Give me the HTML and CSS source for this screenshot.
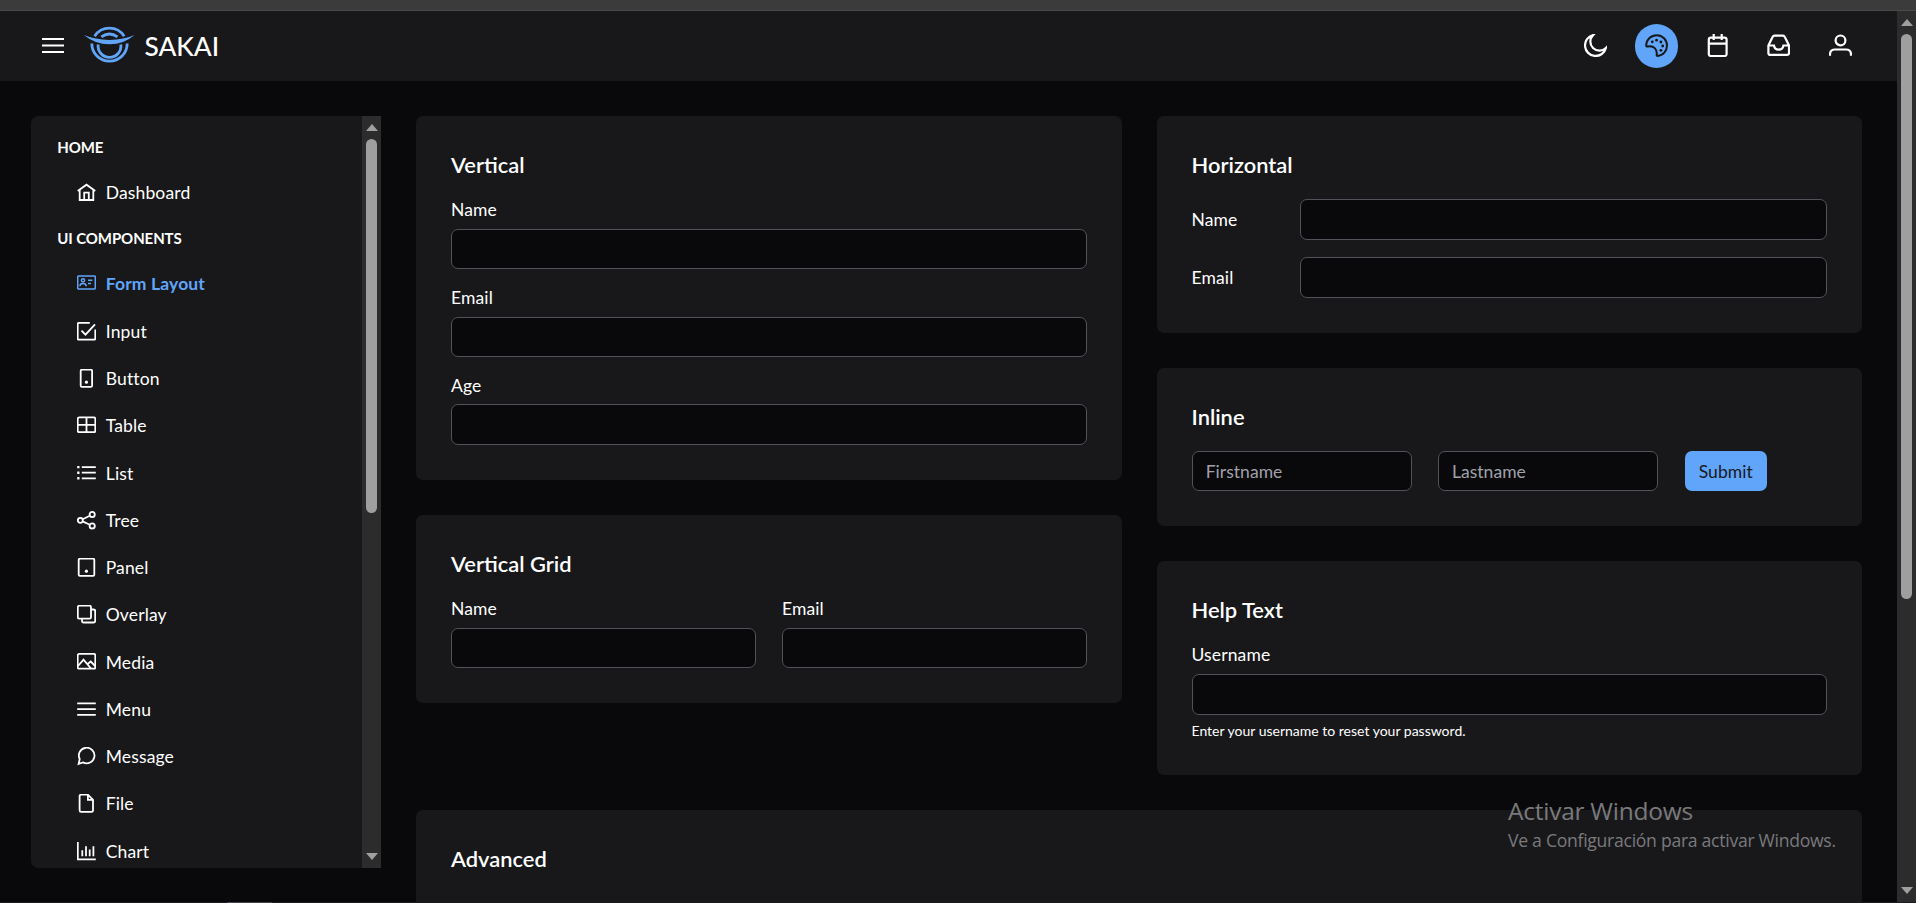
FILE: index.html
```html
<!DOCTYPE html>
<html lang="en">
<head>
<meta charset="utf-8">
<title>Sakai</title>
<link rel="stylesheet" href="styles.css">
</head>
<body>
<div class="chrome-strip"></div>
<div class="viewport">
  <div class="page">
    <header class="topbar">
      <button class="icon-btn"><svg width="23" height="23" viewBox="0 0 23 23"><path d="M1 5h22M1 11.5h22M1 18h22"/></svg></button>
      <a class="brand">
        <svg class="logo" width="52" height="40" viewBox="0 0 52 40">
          <g fill="none" stroke="#60a5fa">
            <path d="M11.6 10.2A17.6 17.6 0 0 1 41.2 10.2" stroke-width="2.8"/>
            <path d="M18.3 10.9Q26.5 5.2 34.5 10.9" stroke-width="2.8"/>
            <path d="M8.8 17.5A17.7 17.7 0 1 0 44.2 17.5" stroke-width="2.8"/>
            <path d="M15.2 18.5A11.4 11.4 0 1 0 37.8 18.5" stroke-width="2.8"/>
          </g>
          <path fill="#60a5fa" d="M.8 9Q12 13.7 26.5 14Q41 13.7 51.5 9Q41 18.3 26.5 18.3T.8 9Z"/>
        </svg>
        <span>SAKAI</span>
      </a>
      <nav class="actions">
        <button class="icon-btn"><svg width="23" height="23" viewBox="0 0 23 23"><path d="M9 1.1A10.6 10.6 0 1 0 21.9 14A8.8 8.8 0 0 1 9 1.1Z"/></svg></button>
        <button class="icon-btn active"><svg width="23" height="23" viewBox="0 0 23 23"><path d="M1.2 11.2C1.5 5.5 6 1.2 11.8 1.2A10.3 10.3 0 0 1 22 11.5C22 17 18 21.6 12.6 21.9Q11.5 21.9 11.7 20.6C12.3 15.5 9 11.2 2.5 12.5Q1.1 12.6 1.2 11.2Z"/><g class="dots"><circle cx="7.3" cy="7.8" r="1.4"/><circle cx="11.6" cy="6.2" r="1.4"/><circle cx="15.9" cy="8" r="1.4"/><circle cx="17.7" cy="12" r="1.4"/><circle cx="15.9" cy="16.3" r="1.4"/></g></svg></button>
        <button class="icon-btn"><svg width="23" height="23" viewBox="0 0 23 23"><rect x="2.8" y="3.7" width="17.8" height="18.3" rx="2"/><path d="M2.8 9.6h17.8M7.7 0v6M15.7 0v6"/></svg></button>
        <button class="icon-btn"><svg width="23" height="23" viewBox="0 0 23 23"><path d="M1.4 11.5L5.7 2.8Q6.2 1.7 7.4 1.7h8.6Q17.2 1.7 17.7 2.8L22 11.5v7.4q0 2-2 2H3.4q-2 0-2-2zM1.4 11.5h5.6q.6 4.2 4.7 4.2t4.7-4.2H22"/></svg></button>
        <button class="icon-btn"><svg width="23" height="23" viewBox="0 0 23 23"><circle cx="11.5" cy="6.4" r="4.9"/><path d="M1 21.7v-1.2q0-5 5-5h11q5 0 5 5v1.2"/></svg></button>
      </nav>
    </header>
    <div class="body">
      <aside class="sidebar">
        <div class="menu">
          <h6>HOME</h6>
          <a><svg viewBox="0 0 19 19"><path d="M.7 8L9.5 1.7L18.3 8M2.7 6.8V17H16.3V6.8M7.2 17V9.6h4.6V17"/></svg>Dashboard</a>
          <h6>UI COMPONENTS</h6>
          <a class="current"><svg viewBox="0 0 19 19"><rect x=".7" y="2" width="17.6" height="13" rx="1"/><circle cx="6" cy="6.3" r="1.6"/><path d="M2.9 12.2q0-2.7 3.1-2.7t3.3 2.7M11 6.3h4.4M11 9.6h3"/></svg>Form Layout</a>
          <a><svg viewBox="0 0 19 19"><path d="M12.8.8H2.2Q.7.8.7 2.3V16.2q0 1.5 1.5 1.5H16.8q1.5 0 1.5-1.5V7.5M4.5 8.6l4 4L18 2.4"/></svg>Input</a>
          <a><svg viewBox="0 0 19 19"><rect x="3.7" y=".7" width="11.4" height="17.2" rx="1.2"/><circle class="dot" cx="9.4" cy="13.2" r="1.6"/></svg>Button</a>
          <a><svg viewBox="0 0 19 19"><rect x=".7" y="1.4" width="17.6" height="14.8" rx="1.5"/><path d="M.7 8.8h17.6M9.5 1.4v14.8"/></svg>Table</a>
          <a><svg viewBox="0 0 19 19"><path d="M4.8 3.1h14M4.8 8.7h14M4.8 14.3h14"/><path d="M.2 3.1h2.3M.2 8.7h2.3M.2 14.3h2.3" stroke-width="2.4"/></svg>List</a>
          <a><svg viewBox="0 0 19 19"><circle cx="3.3" cy="9.3" r="2.5"/><circle cx="15.2" cy="3.5" r="2.6"/><circle cx="15.2" cy="14.9" r="2.6"/><path d="M5.6 8.2l7.2-3.5M5.6 10.4l7.2 3.3"/></svg>Tree</a>
          <a><svg viewBox="0 0 19 19"><rect x="1.7" y=".7" width="15.6" height="17.2" rx="1.2"/><circle class="dot" cx="9.4" cy="13.2" r="1.6"/></svg>Panel</a>
          <a><svg viewBox="0 0 19 19"><rect x=".8" y=".7" width="13.2" height="13" rx="1.5"/><path d="M14 4.5h2.7q1.5 0 1.5 1.5v9.9q0 1.6-1.5 1.6H6.5Q5 17.5 5 16v-2.3"/></svg>Overlay</a>
          <a><svg viewBox="0 0 19 19"><rect x=".7" y=".9" width="17.6" height="14.8" rx="1.5"/><path d="M1 13l5.5-6.4L14 15.5M10.3 11.3L13.7 8.5l4.5 4.5"/></svg>Media</a>
          <a><svg viewBox="0 0 19 19"><path d="M.2 3.4h18.6M.2 9.1h18.6M.2 14.8h18.6"/></svg>Menu</a>
          <a><svg viewBox="0 0 19 19"><path d="M1.6 16.9L2.7 12A7.8 7.8 0 1 1 6 15.4Z"/></svg>Message</a>
          <a><svg viewBox="0 0 19 19"><path d="M10.9.7H4Q2.6.7 2.6 2.1V16.2q0 1.6 1.5 1.6H14.4q1.6 0 1.6-1.6V5.9ZM10.9.7V5.9H16"/></svg>File</a>
          <a><svg viewBox="0 0 19 19"><path d="M.8 0v17.3h18M5.3 8.3v5.9M9 4.3v9.9M12.7 7.6v6.6M16.4 4.3v9.9"/></svg>Chart</a>
        </div>
        <div class="scrollbar"><i class="up"></i><i class="thumb side-thumb"></i><i class="down"></i></div>
      </aside>
      <main class="content">
        <div class="columns">
          <div class="column">
            <section class="card">
              <h2>Vertical</h2>
              <label class="field">Name<input></label>
              <label class="field">Email<input></label>
              <label class="field">Age<input></label>
            </section>
            <section class="card">
              <h2>Vertical Grid</h2>
              <div class="pair">
                <label class="field">Name<input></label>
                <label class="field">Email<input></label>
              </div>
            </section>
          </div>
          <div class="column">
            <section class="card">
              <h2>Horizontal</h2>
              <label class="row">Name<input></label>
              <label class="row">Email<input></label>
            </section>
            <section class="card">
              <h2>Inline</h2>
              <div class="inline">
                <input placeholder="Firstname">
                <input placeholder="Lastname">
                <button class="submit">Submit</button>
              </div>
            </section>
            <section class="card">
              <h2>Help Text</h2>
              <label class="field">Username<input><small>Enter your username to reset your password.</small></label>
            </section>
          </div>
        </div>
        <section class="card advanced"><h2>Advanced</h2></section>
      </main>
    </div>
  </div>
  <div class="scrollbar"><i class="up"></i><i class="thumb page-thumb"></i><i class="down"></i></div>
</div>
<div class="bottom-edge"><i></i></div>
<div class="watermark"><div class="wm-title">Activar Windows</div><div class="wm-text">Ve a Configuración para activar Windows.</div></div>
</body>
</html>
```
FILE: styles.css
```css
html { font-size: 17.5px; }
* { box-sizing: border-box; }
body {
  margin: 0;
  width: 1916px;
  height: 903px;
  overflow: hidden;
  position: relative;
  display: flex;
  flex-direction: column;
  background: #09090b;
  color: #fff;
  font-family: Lato, "Open Sans", sans-serif;
  font-size: 1rem;
  line-height: 21px;
  letter-spacing: .14px;
}
h2, h6 { margin: 0; }
button, input { font: inherit; color: inherit; letter-spacing: .05px; }
svg { fill: none; stroke: currentColor; flex: none; }

.chrome-strip { height: 11px; flex: none; background: #3b3b3b; border-bottom: 1px solid #4a4a4a; }
.viewport { flex: 1; min-height: 0; display: flex; }
.page { flex: 1; min-width: 0; overflow: hidden; }

.topbar {
  height: 70px;
  padding: 0 35px 0 31px;
  display: flex;
  align-items: center;
  background: #18181b;
}
.icon-btn {
  width: 43.75px;
  height: 43.75px;
  padding: 0 0 1px;
  border: 0;
  border-radius: 50%;
  background: none;
  display: flex;
  align-items: center;
  justify-content: center;
  stroke-width: 2.2;
}
.icon-btn.active { background: #60a5fa; color: #18181b; stroke-width: 2; }
.dots { fill: currentColor; stroke: none; }
.brand { margin-left: 8.75px; display: flex; align-items: center; gap: 9.5px; font-size: 26.25px; line-height: 32px; font-weight: 500; letter-spacing: 0; }
.brand .logo { stroke: none; margin-left: -.5px; }
.actions { margin-left: auto; display: flex; gap: 17.5px; }

.body { display: flex; gap: 35px; padding: 35px 35px 0 31px; }
.sidebar {
  width: 350px;
  height: 752px;
  flex: none;
  display: flex;
  overflow: hidden;
  background: #18181b;
  border-radius: 7px 0 0 7px;
}
.menu { flex: 1; overflow: hidden; padding: 8.75px 26.25px; }
.menu h6 { font-size: 15px; line-height: 18px; font-weight: 700; margin: 13.125px 0; letter-spacing: -.09px; }
.menu a {
  height: 47.25px;
  padding-left: 19.75px;
  display: flex;
  align-items: center;
  gap: 9.75px;
}
.menu a svg { width: 19px; height: 19px; stroke-width: 1.8; }
.menu a.current { color: #60a5fa; font-weight: 700; padding-bottom: 1px; }
.menu a.current svg { stroke-width: 1.5; }
.menu .dot { fill: currentColor; stroke: none; }

.scrollbar {
  width: 19px;
  flex: none;
  background: #2c2c2c;
  display: flex;
  flex-direction: column;
  align-items: center;
  padding: 8px 0;
}
.up, .down { border: 6.5px solid transparent; }
.up { border-top: 0; border-bottom: 7px solid #9f9f9f; }
.down { border-bottom: 0; border-top: 7px solid #9f9f9f; margin-top: auto; }
.thumb { width: 11px; margin-top: 8px; border-radius: 6px; background: #9f9f9f; }
.side-thumb { height: 374px; }
.page-thumb { height: 565px; }

.content { flex: 1; min-width: 0; display: flex; flex-direction: column; gap: 35px; }
.columns { display: grid; grid-template-columns: 1fr 1fr; gap: 35px; }
.column { display: flex; flex-direction: column; gap: 35px; }
.card {
  background: #18181b;
  border-radius: 7px;
  padding: 35px;
  display: flex;
  flex-direction: column;
  gap: 17.5px;
}
.card h2 { font-size: 21.875px; line-height: 28.625px; padding-bottom: 2px; font-weight: 600; letter-spacing: 0; }
.advanced { height: 200px; }
.field { display: flex; flex-direction: column; gap: 8.75px; }
.field small { font-size: 14px; line-height: 15px; padding-bottom: 2px; letter-spacing: 0; }
.row { display: flex; align-items: center; justify-content: space-between; }
.row input { width: 527px; }
.pair { display: grid; grid-template-columns: 1fr 1fr; gap: 26.25px; }
.inline { display: flex; gap: 26.25px; }
.inline input { width: 220px; }
input {
  width: 100%;
  height: 40.5px;
  padding: 8.75px 13.125px;
  border: 1px solid #52525b;
  border-radius: 7px;
  background: #09090b;
}
input::placeholder { color: #a1a1aa; opacity: 1; }
.submit {
  width: 82px;
  height: 40.5px;
  margin-left: .75px;
  padding: 0;
  border: 0;
  border-radius: 7px;
  background: #60a5fa;
  color: #18181b;
}
.bottom-edge { height: 1px; flex: none; background: #1c1b20; padding-left: 227px; }
.bottom-edge i { display: block; width: 45px; height: 1px; background: #45454d; }
.watermark {
  position: absolute;
  left: 1508px;
  top: 795px;
  color: #7a7a7b;
  font-family: "Open Sans", "Noto Sans", sans-serif;
  white-space: nowrap;
}
.wm-title { font-size: 24.5px; line-height: 32px; letter-spacing: -.25px; }
.wm-text { font-size: 17.6px; line-height: 27px; letter-spacing: -.28px; }
```
